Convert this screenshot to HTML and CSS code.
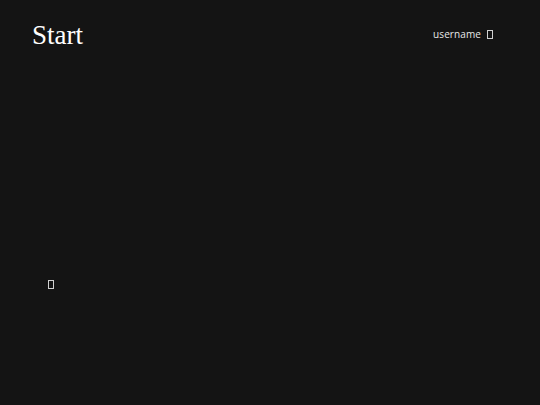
FILE: index.html
```html
<!DOCTYPE html>
<html lang="en">
<head>
    <meta charset="UTF-8">
    <title>Start</title>
    <link rel="stylesheet" href="styles.css">
</head>
<body>
    <!-- Header -->
    <div class="header">
        <div class="title">Start</div>
        <div class="user">
            <span class="user-name">username</span>
            <span class="icon"></span>
        </div>
    </div>

    <!-- Tiles area -->
    <div class="tiles">
        <span class="icon"></span>
    </div>
</body>
</html>
```

FILE: styles.css
```css
body {
    margin: 0;
    padding: 0;
    width: 540px;
    height: 405px;
    background-color: #141414;
    color: #e8e8e8;
    overflow: hidden;
}
.header {
    display: flex;
    justify-content: space-between;
    align-items: flex-start;
    padding: 18px 47px 0 32px;
}
.title {
    font-family: 'Liberation Serif', serif;
    font-size: 27px;
    line-height: 34px;
    color: white;
}
.user {
    display: flex;
    align-items: center;
    gap: 6px;
    padding-top: 9px;
    font-family: 'Open Sans', sans-serif;
    font-size: 10px;
    letter-spacing: 0.1px;
}
/* missing glyph box */
.icon {
    display: block;
    width: 4px;
    height: 7px;
    border: 1px solid #d0d0d0;
}
.tiles {
    padding: 228px 0 0 48px;
}
```
